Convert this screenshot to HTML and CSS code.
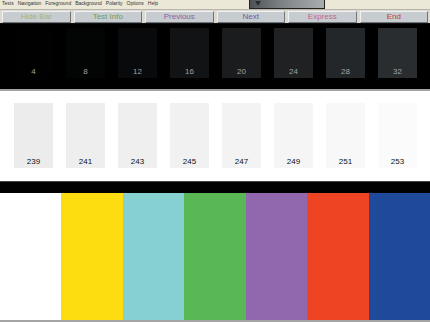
FILE: index.html
```html
<!DOCTYPE html>
<html lang="en">
<head>
  <meta charset="UTF-8" />
  <title>Monitor Test</title>
  <link rel="stylesheet" href="styles.css">
</head>
<body>
  <div class="menubar">
    <span>Tests</span>
    <span>Navigation</span>
    <span>Foreground</span>
    <span>Background</span>
    <span>Polarity</span>
    <span>Options</span>
    <span>Help</span>
    <div class="thumb"><span class="arrow"></span></div>
  </div>

  <div class="toolbar">
    <button class="tbtn hide">Hide Bar</button>
    <button class="tbtn info">Test Info</button>
    <button class="tbtn prev">Previous</button>
    <button class="tbtn next">Next</button>
    <button class="tbtn express">Express</button>
    <button class="tbtn end">End</button>
  </div>

  <div class="dark">
    <div class="sw d4">4</div>
    <div class="sw d8">8</div>
    <div class="sw d12">12</div>
    <div class="sw d16">16</div>
    <div class="sw d20">20</div>
    <div class="sw d24">24</div>
    <div class="sw d28">28</div>
    <div class="sw d32">32</div>
  </div>

  <div class="light">
    <div class="sw l239">239</div>
    <div class="sw l241">241</div>
    <div class="sw l243">243</div>
    <div class="sw l245">245</div>
    <div class="sw l247">247</div>
    <div class="sw l249">249</div>
    <div class="sw l251">251</div>
    <div class="sw l253">253</div>
  </div>

  <div class="band"></div>

  <div class="bars">
    <div class="bar white"></div>
    <div class="bar yellow"></div>
    <div class="bar cyan"></div>
    <div class="bar green"></div>
    <div class="bar purple"></div>
    <div class="bar red"></div>
    <div class="bar blue"></div>
  </div>
</body>
</html>
```

FILE: styles.css
```css
* {
  box-sizing: border-box;
  margin: 0;
  padding: 0;
}
body {
  width: 430px;
  height: 322px;
  overflow: hidden;
  background: #fff;
  font-family: 'Liberation Sans', Arial, sans-serif;
}

/* menu bar */
.menubar {
  height: 9px;
  background: #ebe8d8;
  display: flex;
  align-items: flex-start;
  gap: 4px;
  padding-left: 2px;
  font-size: 5px;
  line-height: 7px;
  color: #333;
}
.thumb {
  margin-left: 87px;
  width: 76px;
  height: 9px;
  background: linear-gradient(to right, #4d5254, #7b8083 40%, #a9adaf);
  border: 1px solid #222;
  border-top: none;
  position: relative;
}
.thumb .arrow {
  position: absolute;
  left: 5px;
  top: 1px;
  border-left: 3px solid transparent;
  border-right: 3px solid transparent;
  border-top: 5px solid #2a2e30;
}

/* toolbar */
.toolbar {
  height: 14px;
  background: #dcdad0;
  border-top: 1px solid #b8b6ac;
  display: grid;
  grid-template-columns: repeat(6, 1fr);
  gap: 3px;
  padding: 1px 2px 1px 2px;
}
.tbtn {
  height: 12px;
  background: #c7ccd0;
  border: 1px solid;
  border-color: #f2f2f2 #707478 #707478 #f2f2f2;
  font-family: 'Liberation Sans', Arial, sans-serif;
  font-size: 8px;
  line-height: 10px;
  text-align: center;
}
.hide { color: #a9b46a; }
.info { color: #6e9e62; }
.prev { color: #8a62a0; }
.next { color: #6c5ca6; }
.express { color: #c0668a; }
.end { color: #c23848; }

/* swatches */
.dark, .light {
  display: grid;
  grid-template-columns: repeat(8, 39px);
  column-gap: 13px;
  padding-left: 14px;
}
.dark {
  height: 68px;
  background: #000;
  border-top: 1px solid #111;
  padding-top: 4px;
  border-bottom: 2px solid #a2a2a2;
}
.light {
  height: 90px;
  padding-top: 12px;
}
.sw {
  display: flex;
  align-items: flex-end;
  justify-content: center;
  font-size: 8px;
}
.dark .sw {
  height: 50px;
  padding-bottom: 2px;
  color: #a0a2a4;
}
.light .sw {
  height: 65px;
  padding-bottom: 2px;
  color: #111;
}
.d4 { background: #010101; }
.d8 { background: #030404; }
.d12 { background: #090a0b; }
.d16 { background: #111314; }
.d20 { background: #1a1c1e; }
.d24 { background: #1f2123; }
.d28 { background: #24272a; }
.d32 { background: #2a2d30; }
.l239 { background: #ececec; }
.l241 { background: #eeeeee; }
.l243 { background: #efefef; }
.l245 { background: #f1f1f1; }
.l247 { background: #f3f3f3; }
.l249 { background: #f5f5f5; }
.l251 { background: #f8f8f8; }
.l253 { background: #fbfbfb; }

/* colour bars */
.band {
  height: 12px;
  background: #000;
  border-top: 1px solid #444;
}
.bars {
  display: grid;
  grid-template-columns: repeat(7, 1fr);
  height: 129px;
  border-bottom: 2px solid #a4a4a4;
}
.white { background: #fff; }
.yellow { background: #fddd10; }
.cyan { background: #87d0d1; }
.green { background: #59b855; }
.purple { background: #9168ad; }
.red { background: #ef4424; }
.blue { background: #1f4a9b; }
```
